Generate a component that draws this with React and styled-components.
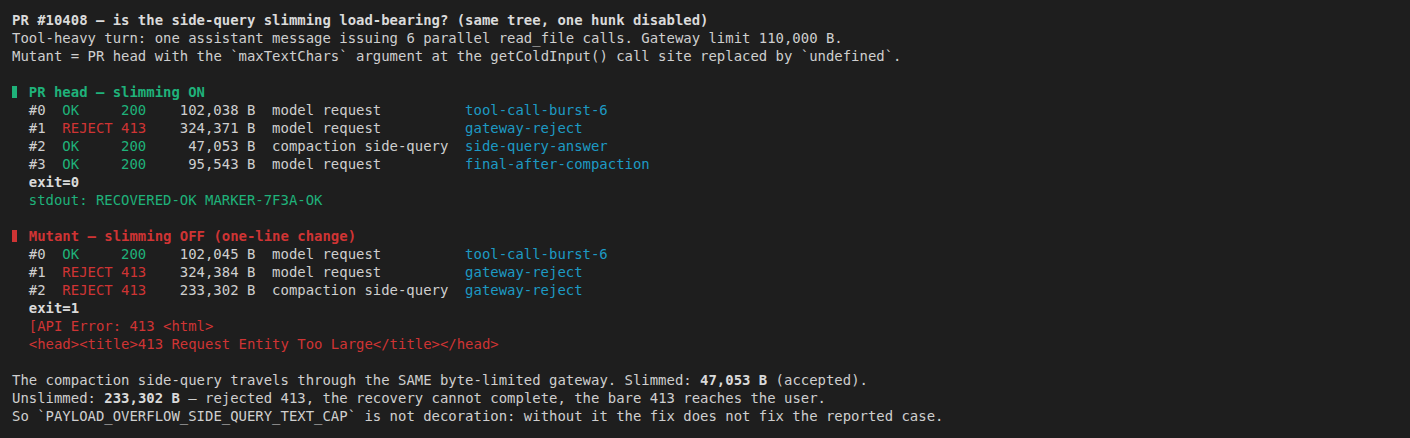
import React from "react";
import styled, {createGlobalStyle} from "styled-components";

const GlobalStyle = createGlobalStyle`
  html, body {
    margin: 0;
    padding: 0;
    background: #1e1e1e;
  }
`;

const colors = {
  text: "#cfcfcf",
  bold: "#dadada",
  green: "#1fb27a",
  red: "#cf3434",
  cyan: "#1d9ac4",
};

const Terminal = styled.div`
  background: #1e1e1e;
  color: ${colors.text};
  font-family: "DejaVu Sans Mono", "Liberation Mono", monospace;
  font-size: 13.95px;
  line-height: 18px;
  padding: 11px 12px;
  min-height: 438px;
  box-sizing: border-box;
`;

const Line = styled.div`
  height: 18px;
  white-space: pre;
  display: flex;
  align-items: center;
  padding-left: ${(p) => (p.$indent ? "2ch" : "0")};
  color: ${(p) => (p.$tone ? colors[p.$tone] : "inherit")};
`;

const Strong = styled.b`
  font-weight: 700;
  color: ${colors.bold};
`;

const Bar = styled.span`
  display: inline-block;
  width: 5px;
  height: 12px;
  margin-right: calc(2ch - 5px);
  background: ${(p) => colors[p.$tone]};
`;

const Heading = styled.span`
  font-weight: 700;
  color: ${(p) => colors[p.$tone]};
`;

const Cell = styled.span`
  display: inline-block;
  width: ${(p) => p.$w}ch;
  text-align: ${(p) => (p.$right ? "right" : "left")};
  color: ${(p) => (p.$tone ? colors[p.$tone] : "inherit")};
  flex-shrink: 0;
`;

const Tag = styled.span`
  color: ${colors.cyan};
`;

const Blank = () => <Line />;

const RequestRow = ({idx, ok, bytes, kind, tag}) => {
  const tone = ok ? "green" : "red";
  return (
    <Line $indent>
      <Cell $w={4}>#{idx}</Cell>
      <Cell $w={7} $tone={tone}>{ok ? "OK" : "REJECT"}</Cell>
      <Cell $w={3} $tone={tone}>{ok ? "200" : "413"}</Cell>
      <Cell $w={11} $right>{bytes}</Cell>
      <Cell $w={4}> B</Cell>
      <Cell $w={23}>{kind}</Cell>
      <Tag>{tag}</Tag>
    </Line>
  );
};

const prHead = [
  {ok: true, bytes: "102,038", kind: "model request", tag: "tool-call-burst-6"},
  {ok: false, bytes: "324,371", kind: "model request", tag: "gateway-reject"},
  {ok: true, bytes: "47,053", kind: "compaction side-query", tag: "side-query-answer"},
  {ok: true, bytes: "95,543", kind: "model request", tag: "final-after-compaction"},
];

const mutant = [
  {ok: true, bytes: "102,045", kind: "model request", tag: "tool-call-burst-6"},
  {ok: false, bytes: "324,384", kind: "model request", tag: "gateway-reject"},
  {ok: false, bytes: "233,302", kind: "compaction side-query", tag: "gateway-reject"},
];

export default function App() {
  return (
    <>
      <GlobalStyle />
      <Terminal>
        <Line><Strong>PR #10408 — is the side-query slimming load-bearing? (same tree, one hunk disabled)</Strong></Line>
        <Line>Tool-heavy turn: one assistant message issuing 6 parallel read_file calls. Gateway limit 110,000 B.</Line>
        <Line>Mutant = PR head with the `maxTextChars` argument at the getColdInput() call site replaced by `undefined`.</Line>
        <Blank />

        <Line><Bar $tone="green" /><Heading $tone="green">PR head — slimming ON</Heading></Line>
        {prHead.map((r, i) => <RequestRow key={i} idx={i} {...r} />)}
        <Line $indent><Strong>exit=0</Strong></Line>
        <Line $indent $tone="green">stdout: RECOVERED-OK MARKER-7F3A-OK</Line>
        <Blank />

        <Line><Bar $tone="red" /><Heading $tone="red">Mutant — slimming OFF (one-line change)</Heading></Line>
        {mutant.map((r, i) => <RequestRow key={i} idx={i} {...r} />)}
        <Line $indent><Strong>exit=1</Strong></Line>
        <Line $indent $tone="red">[API Error: 413 &lt;html&gt;</Line>
        <Line $indent $tone="red">&lt;head&gt;&lt;title&gt;413 Request Entity Too Large&lt;/title&gt;&lt;/head&gt;</Line>
        <Blank />

        <Line>The compaction side-query travels through the SAME byte-limited gateway. Slimmed: <Strong>47,053 B</Strong> (accepted).</Line>
        <Line>Unslimmed: <Strong>233,302 B</Strong> — rejected 413, the recovery cannot complete, the bare 413 reaches the user.</Line>
        <Line>So `PAYLOAD_OVERFLOW_SIDE_QUERY_TEXT_CAP` is not decoration: without it the fix does not fix the reported case.</Line>
      </Terminal>
    </>
  );
}
